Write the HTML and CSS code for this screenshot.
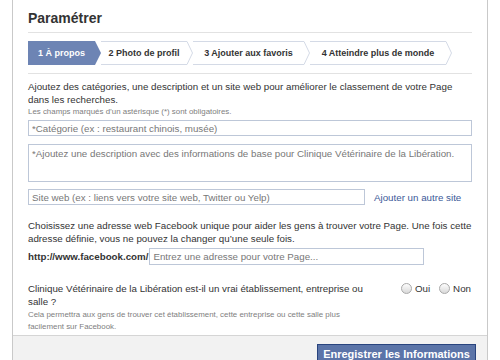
FILE: index.html
```html
<!DOCTYPE html>
<html lang="fr">
<head>
<meta charset="utf-8">
<title>Paramétrer</title>
<link rel="stylesheet" href="styles.css">
</head>
<body>
<div class="dialog">
  <div class="content">
    <h2 class="title">Paramétrer</h2>
    <div class="steps-wrap">
      <ol class="steps">
        <li class="step step-1 active"><span class="label">1 À propos</span><svg class="chev" width="6" height="24" viewBox="0 0 6 24"><polygon points="0,0 6,12 0,24" fill="#6d84b4"/></svg></li>
        <li class="step step-2"><span class="label">2 Photo de profil</span><svg class="chev" width="6" height="24" viewBox="0 0 6 24"><polyline points="0,0.5 5.5,12 0,23.5" fill="#fff" stroke="#d4dae6" stroke-width="1"/></svg></li>
        <li class="step step-3"><span class="label">3 Ajouter aux favoris</span><svg class="chev" width="6" height="24" viewBox="0 0 6 24"><polyline points="0,0.5 5.5,12 0,23.5" fill="#fff" stroke="#d4dae6" stroke-width="1"/></svg></li>
        <li class="step step-4"><span class="label">4 Atteindre plus de monde</span><svg class="chev" width="6" height="24" viewBox="0 0 6 24"><polyline points="0,0.5 5.5,12 0,23.5" fill="#fff" stroke="#d4dae6" stroke-width="1"/></svg></li>
      </ol>
    </div>

    <p class="intro">Ajoutez des catégories, une description et un site web pour améliorer le classement de votre Page<br>dans les recherches.</p>
    <p class="hint">Les champs marqués d’un astérisque (*) sont obligatoires.</p>

    <input class="field field-full field-cat" type="text" placeholder="*Catégorie (ex : restaurant chinois, musée)">
    <textarea class="field field-full field-desc" placeholder="*Ajoutez une description avec des informations de base pour Clinique Vétérinaire de la Libération."></textarea>

    <div class="site-row">
      <input class="field field-site" type="text" placeholder="Site web (ex : liens vers votre site web, Twitter ou Yelp)">
      <a class="link" href="#">Ajouter un autre site</a>
    </div>

    <p class="para">Choisissez une adresse web Facebook unique pour aider les gens à trouver votre Page. Une fois cette<br>adresse définie, vous ne pouvez la changer qu’une seule fois.</p>
    <div class="url-row">
      <span class="url-label">http://www.facebook.com/</span>
      <input class="field field-url" type="text" placeholder="Entrez une adresse pour votre Page...">
    </div>

    <div class="question">
      <div class="q-text">
        <p class="q-main">Clinique Vétérinaire de la Libération est-il un vrai établissement, entreprise ou<br>salle ?</p>
        <p class="q-hint">Cela permettra aux gens de trouver cet établissement, cette entreprise ou cette salle plus<br>facilement sur Facebook.</p>
      </div>
      <div class="radios">
        <label class="radio"><span class="dot"></span>Oui</label>
        <label class="radio"><span class="dot"></span>Non</label>
      </div>
    </div>
  </div>
  <div class="footer">
    <button class="btn" type="button">Enregistrer les Informations</button>
  </div>
</div>
</body>
</html>
```

FILE: styles.css
```css
html, body {
  margin: 0;
  padding: 0;
  background: #fff;
}
body {
  font-family: "Liberation Sans", Arial, sans-serif;
  font-size: 9.75px;
  color: #333;
}
.dialog {
  margin-left: 12px;
  width: 474px;
  border: 1px solid #c9c9c9;
  border-top: none;
  background: #fff;
}
.content {
  padding: 0 15px 2px;
}
.title {
  margin: 0;
  padding-top: 10px;
  padding-bottom: 5px;
  font-size: 14px;
  line-height: 17px;
  font-weight: bold;
  color: #333;
  border-bottom: 1px solid #e2e2e2;
}
.steps-wrap {
  padding: 8px 0 8px;
  border-bottom: 1px solid #e2e2e2;
}
.steps {
  list-style: none;
  margin: 0;
  padding: 0;
  display: flex;
  height: 24px;
}
.step {
  display: flex;
  height: 24px;
}
.label {
  box-sizing: border-box;
  height: 24px;
  display: flex;
  align-items: center;
  justify-content: center;
  font-size: 9px;
  font-weight: bold;
  color: #333;
  border-top: 1px solid #d4dae6;
  border-bottom: 1px solid #d4dae6;
  white-space: nowrap;
}
.chev {
  display: block;
  flex: none;
}
.step-1 .label {
  width: 67px;
  background: #6d84b4;
  border-color: #6d84b4;
  color: #fff;
}
.step-2 .label { width: 86px; }
.step-3 .label { width: 111px; }
.step-4 .label { width: 136px; }

.intro {
  margin: 6px 0 0;
  line-height: 13px;
}
.hint {
  margin: 0;
  font-size: 7.9px;
  line-height: 11px;
  color: #808080;
}
.field {
  box-sizing: border-box;
  display: block;
  margin: 0;
  border: 1px solid #bdc7d8;
  background: #fff;
  font-family: "Liberation Sans", Arial, sans-serif;
  font-size: 9.75px;
  color: #333;
  padding: 0 3px;
  outline: none;
}
.field::placeholder {
  color: #777;
  opacity: 1;
}
.field-full {
  width: 100%;
}
.field-cat {
  margin-top: 3px;
  height: 16px;
}
.field-desc {
  margin-top: 8px;
  height: 38px;
  resize: none;
  padding: 3px 3px;
  line-height: 12px;
}
.site-row {
  margin-top: 7px;
  display: flex;
  align-items: center;
  gap: 9px;
}
.field-site {
  width: 337px;
  height: 16px;
}
.link {
  color: #3b5998;
  text-decoration: none;
}
.para {
  margin: 14px 0 0;
  line-height: 13px;
}
.url-row {
  margin-top: 3px;
  display: flex;
  align-items: center;
  gap: 1px;
}
.url-label {
  font-weight: bold;
  color: #333;
}
.field-url {
  width: 275px;
  height: 17px;
}
.question {
  margin-top: 17px;
  display: flex;
  align-items: flex-start;
}
.q-text {
  flex: 1;
}
.q-main {
  margin: 0;
  line-height: 13px;
}
.q-hint {
  margin: 1px 0 0;
  font-size: 7.9px;
  line-height: 12px;
  color: #808080;
}
.radios {
  display: flex;
  gap: 9px;
  padding-right: 1px;
  margin-top: 0;
  line-height: 13px;
}
.radio {
  display: flex;
  align-items: center;
  gap: 3px;
  color: #333;
}
.dot {
  box-sizing: border-box;
  display: block;
  width: 11px;
  height: 11px;
  border-radius: 50%;
  border: 1px solid #a9a9a9;
  background: linear-gradient(#fdfdfd, #d9d9d9);
}
.footer {
  background: #f2f2f2;
  border-top: 1px solid #d5d5d5;
  padding: 8px 11px 8px 0;
  display: flex;
  justify-content: flex-end;
}
.btn {
  margin: 0;
  box-sizing: border-box;
  width: 159px;
  height: 20px;
  padding: 0 4px;
  background: #5b74a8;
  border: 1px solid #29447e;
  color: #fff;
  font-family: "Liberation Sans", Arial, sans-serif;
  font-size: 11px;
  font-weight: bold;
  text-align: center;
}
```
